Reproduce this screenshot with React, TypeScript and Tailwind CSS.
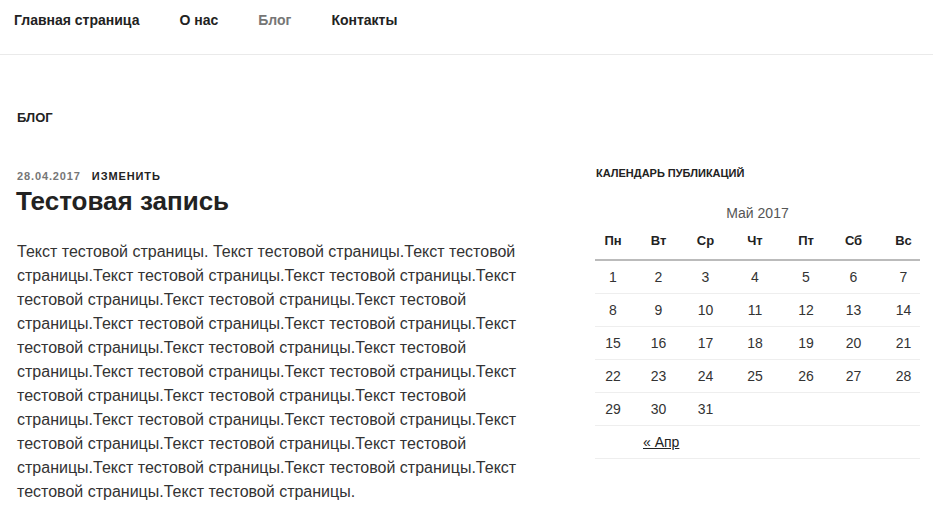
import React from "react";

const days = [
  ["1", "2", "3", "4", "5", "6", "7"],
  ["8", "9", "10", "11", "12", "13", "14"],
  ["15", "16", "17", "18", "19", "20", "21"],
  ["22", "23", "24", "25", "26", "27", "28"],
  ["29", "30", "31", "", "", "", ""],
];
const heads = ["Пн", "Вт", "Ср", "Чт", "Пт", "Сб", "Вс"];
const cols = "grid grid-cols-[36px_55px_39px_60px_42px_53px_47px]";

const text = "Текст тестовой страницы. " + "Текст тестовой страницы.".repeat(26);

export default function App() {
  return (
    <div className="w-[933px] h-[519px] overflow-hidden bg-white font-['Liberation_Sans',Arial,sans-serif] text-[#333]">
      <nav className="h-[55px] border-b border-[#eaeaea] flex items-start gap-10 pl-[14px] pt-[11px] text-[14px] leading-[18px] font-bold text-[#222]">
        <a>Главная страница</a>
        <a>О нас</a>
        <a className="text-[#767676]">Блог</a>
        <a>Контакты</a>
      </nav>
      <div className="flex pl-[17px] gap-[76px]">
        <main className="w-[502px] shrink-0">
          <h2 className="mt-[53px] text-[13px] leading-[20px] font-bold text-[#222] uppercase">Блог</h2>
          <div className="mt-[40px] flex gap-[11px] text-[11px] leading-[16px] font-bold uppercase tracking-[0.08em]">
            <span className="text-[#767676]">28.04.2017</span>
            <span className="text-[#222]">Изменить</span>
          </div>
          <h1 className="mt-[1px] -ml-[1px] text-[26px] leading-[32px] font-bold text-[#222]">Тестовая запись</h1>
          <p className="mt-[23px] text-[16px] leading-[24px] text-[#333]">{text}</p>
        </main>
        <aside className="w-[325px] shrink-0 pt-[110px]">
          <h2 className="pl-[1px] text-[11px] leading-[16px] font-bold uppercase text-[#222]">Календарь публикаций</h2>
          <div className="mt-[24px] text-center text-[14px] leading-[16px] text-[#555]">Май 2017</div>
          <div className={`${cols} mt-[3px] h-[37px] items-center pb-[2px] border-b-2 border-[#bbb] text-[13px] font-bold text-[#222]`}>
            {heads.map((h) => (
              <div key={h} className="text-center">{h}</div>
            ))}
          </div>
          {days.map((row, i) => (
            <div key={i} className={`${cols} h-[33px] items-center border-b border-[#eee] text-[14px] text-[#333] pt-[1px]`}>
              {row.map((d, j) => (
                <div key={j} className="text-center">{d}</div>
              ))}
            </div>
          ))}
          <div className="h-[33px] flex items-center border-b border-[#eee] pl-[48px] text-[14px] text-[#222] pt-[1px]">
            <a className="underline">« Апр</a>
          </div>
        </aside>
      </div>
    </div>
  );
}
